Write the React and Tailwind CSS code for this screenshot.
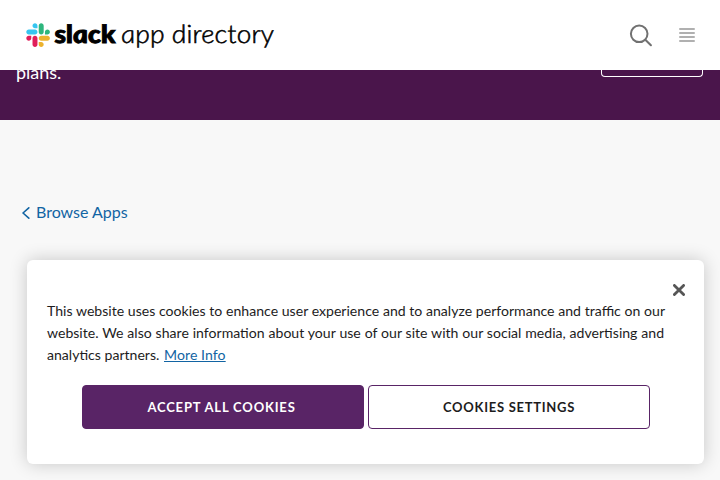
function SlackLogo() {
  return (
    <svg className="block" width="260" height="48" viewBox="20 11 260 48" role="img" aria-label="slack app directory">
      <g transform="translate(26.3 23.3) scale(0.1922)">
        <path fill="#E01E5A" d="M25.8 77.6c0 7.1-5.8 12.9-12.9 12.9S0 84.7 0 77.6s5.8-12.9 12.9-12.9h12.9v12.9zm6.5 0c0-7.1 5.8-12.9 12.9-12.9s12.9 5.8 12.9 12.9v32.3c0 7.1-5.8 12.9-12.9 12.9s-12.9-5.8-12.9-12.9V77.6z" />
        <path fill="#36C5F0" d="M45.2 25.8c-7.1 0-12.9-5.8-12.9-12.9S38.1 0 45.2 0s12.9 5.8 12.9 12.9v12.9H45.2zm0 6.5c7.1 0 12.9 5.8 12.9 12.9s-5.8 12.9-12.9 12.9H12.9C5.8 58.1 0 52.3 0 45.2s5.8-12.9 12.9-12.9h32.3z" />
        <path fill="#2EB67D" d="M97 45.2c0-7.1 5.8-12.9 12.9-12.9s12.9 5.8 12.9 12.9-5.8 12.9-12.9 12.9H97V45.2zm-6.5 0c0 7.1-5.8 12.9-12.9 12.9s-12.9-5.8-12.9-12.9V12.9C64.7 5.8 70.5 0 77.6 0s12.9 5.8 12.9 12.9v32.3z" />
        <path fill="#ECB22E" d="M77.6 97c7.1 0 12.9 5.8 12.9 12.9s-5.8 12.9-12.9 12.9-12.9-5.8-12.9-12.9V97h12.9zm0-6.5c-7.1 0-12.9-5.8-12.9-12.9s5.8-12.9 12.9-12.9h32.3c7.1 0 12.9 5.8 12.9 12.9s-5.8 12.9-12.9 12.9H77.6z" />
      </g>
      {/* Italic letterforms give the single-storey "a"; the skew sets them upright. */}
      <g transform="translate(0 42.7) skewX(8)" className="fill-black font-['Lato',sans-serif] italic [text-rendering:geometricPrecision]">
        <text x="55.5" y="0" textLength="61" lengthAdjust="spacingAndGlyphs" strokeWidth="0.9" className="stroke-black text-[25px] font-black">slack</text>
        <text x="122" y="0" textLength="153" lengthAdjust="spacingAndGlyphs" strokeWidth="0.5" className="stroke-black text-[25.5px] font-light">app directory</text>
      </g>
    </svg>
  );
}

function Header() {
  return (
    <header className="flex h-[70px] shrink-0 items-center justify-between bg-white pr-[25px] pl-5">
      <SlackLogo />
      <div className="flex items-center gap-[25px]">
        <button aria-label="Search">
          <svg className="block" width="26" height="26" viewBox="628 22 26 26" fill="none" stroke="#717171" strokeLinecap="round">
            <circle cx="639.2" cy="33.8" r="8.3" strokeWidth="2" />
            <path d="M645.3 39.8l5.6 5.4" strokeWidth="2.1" />
          </svg>
        </button>
        <button aria-label="Menu" className="flex w-4 flex-col gap-[2px]">
          <span className="h-[2px] rounded-full bg-[#b0b0b0]" />
          <span className="h-[2px] rounded-full bg-[#b0b0b0]" />
          <span className="h-[2px] rounded-full bg-[#b0b0b0]" />
          <span className="h-[2px] rounded-full bg-[#b0b0b0]" />
        </button>
      </div>
    </header>
  );
}

function Banner() {
  return (
    <section className="flex h-[50px] shrink-0 items-start justify-between overflow-hidden bg-[#4a154b] pr-[17px] pl-4 text-white">
      <p className="-mt-[11px] text-[18px] leading-[27px]">plans.</p>
      <div className="h-[7px] w-[102px] rounded-b-[4px] border border-t-0 border-white" />
    </section>
  );
}

function CookieDialog() {
  return (
    <div role="dialog" className="mr-4 ml-[27px] flex h-[204px] flex-col rounded-[6px] bg-white px-5 shadow-[0_0_18px_rgba(0,0,0,0.2)]">
      <div className="flex h-10 items-end justify-end">
        <button aria-label="Close" className="mb-1 -mr-px">
          <svg className="block" width="12" height="12" viewBox="0 0 12 12" stroke="#565656" strokeWidth="2.8" strokeLinecap="round">
            <path d="M1.4 1.4l9.2 9.2M10.6 1.4l-9.2 9.2" />
          </svg>
        </button>
      </div>
      <p className="text-[14.08px] leading-[22px] whitespace-nowrap text-[#1d1c1d]">
        <span className="[word-spacing:0.1px]">This website uses cookies to enhance user experience and to analyze performance and traffic on our</span>
        <br />
        <span className="[word-spacing:0.28px]">website. We also share information about your use of our site with our social media, advertising and</span>
        <br />
        analytics partners. <a className="ml-px tracking-[0.08px] text-[#1264a3] underline">More Info</a>
      </p>
      <div className="mt-[19px] ml-[35px] flex gap-1 text-[13px] font-bold">
        <button className="h-11 w-[282px] rounded-[4px] border border-[#592466] bg-[#592466] pt-[2px] pr-[3px] tracking-[0.82px] text-white">ACCEPT ALL COOKIES</button>
        <button className="h-11 w-[282px] rounded-[4px] border border-[#592466] bg-white pt-[2px] tracking-[0.72px] text-[#1d1c1d]">COOKIES SETTINGS</button>
      </div>
    </div>
  );
}

export default function App() {
  return (
    <div className="flex h-[480px] w-[720px] flex-col overflow-hidden bg-[#f8f8f8] font-['Lato',sans-serif]">
      <Header />
      <Banner />
      <main className="pt-20">
        <a className="mb-9 ml-[22px] flex h-6 items-center gap-[6px] text-[16px] leading-6 text-[#1264a3]">
          <svg className="mt-[2px]" width="8" height="12" viewBox="0 0 8 12" fill="none" stroke="#1264a3" strokeWidth="1.6" strokeLinecap="round" strokeLinejoin="round">
            <path d="M6.8 .8L1 6l5.8 5.2" />
          </svg>
          Browse Apps
        </a>
        <CookieDialog />
      </main>
    </div>
  );
}
